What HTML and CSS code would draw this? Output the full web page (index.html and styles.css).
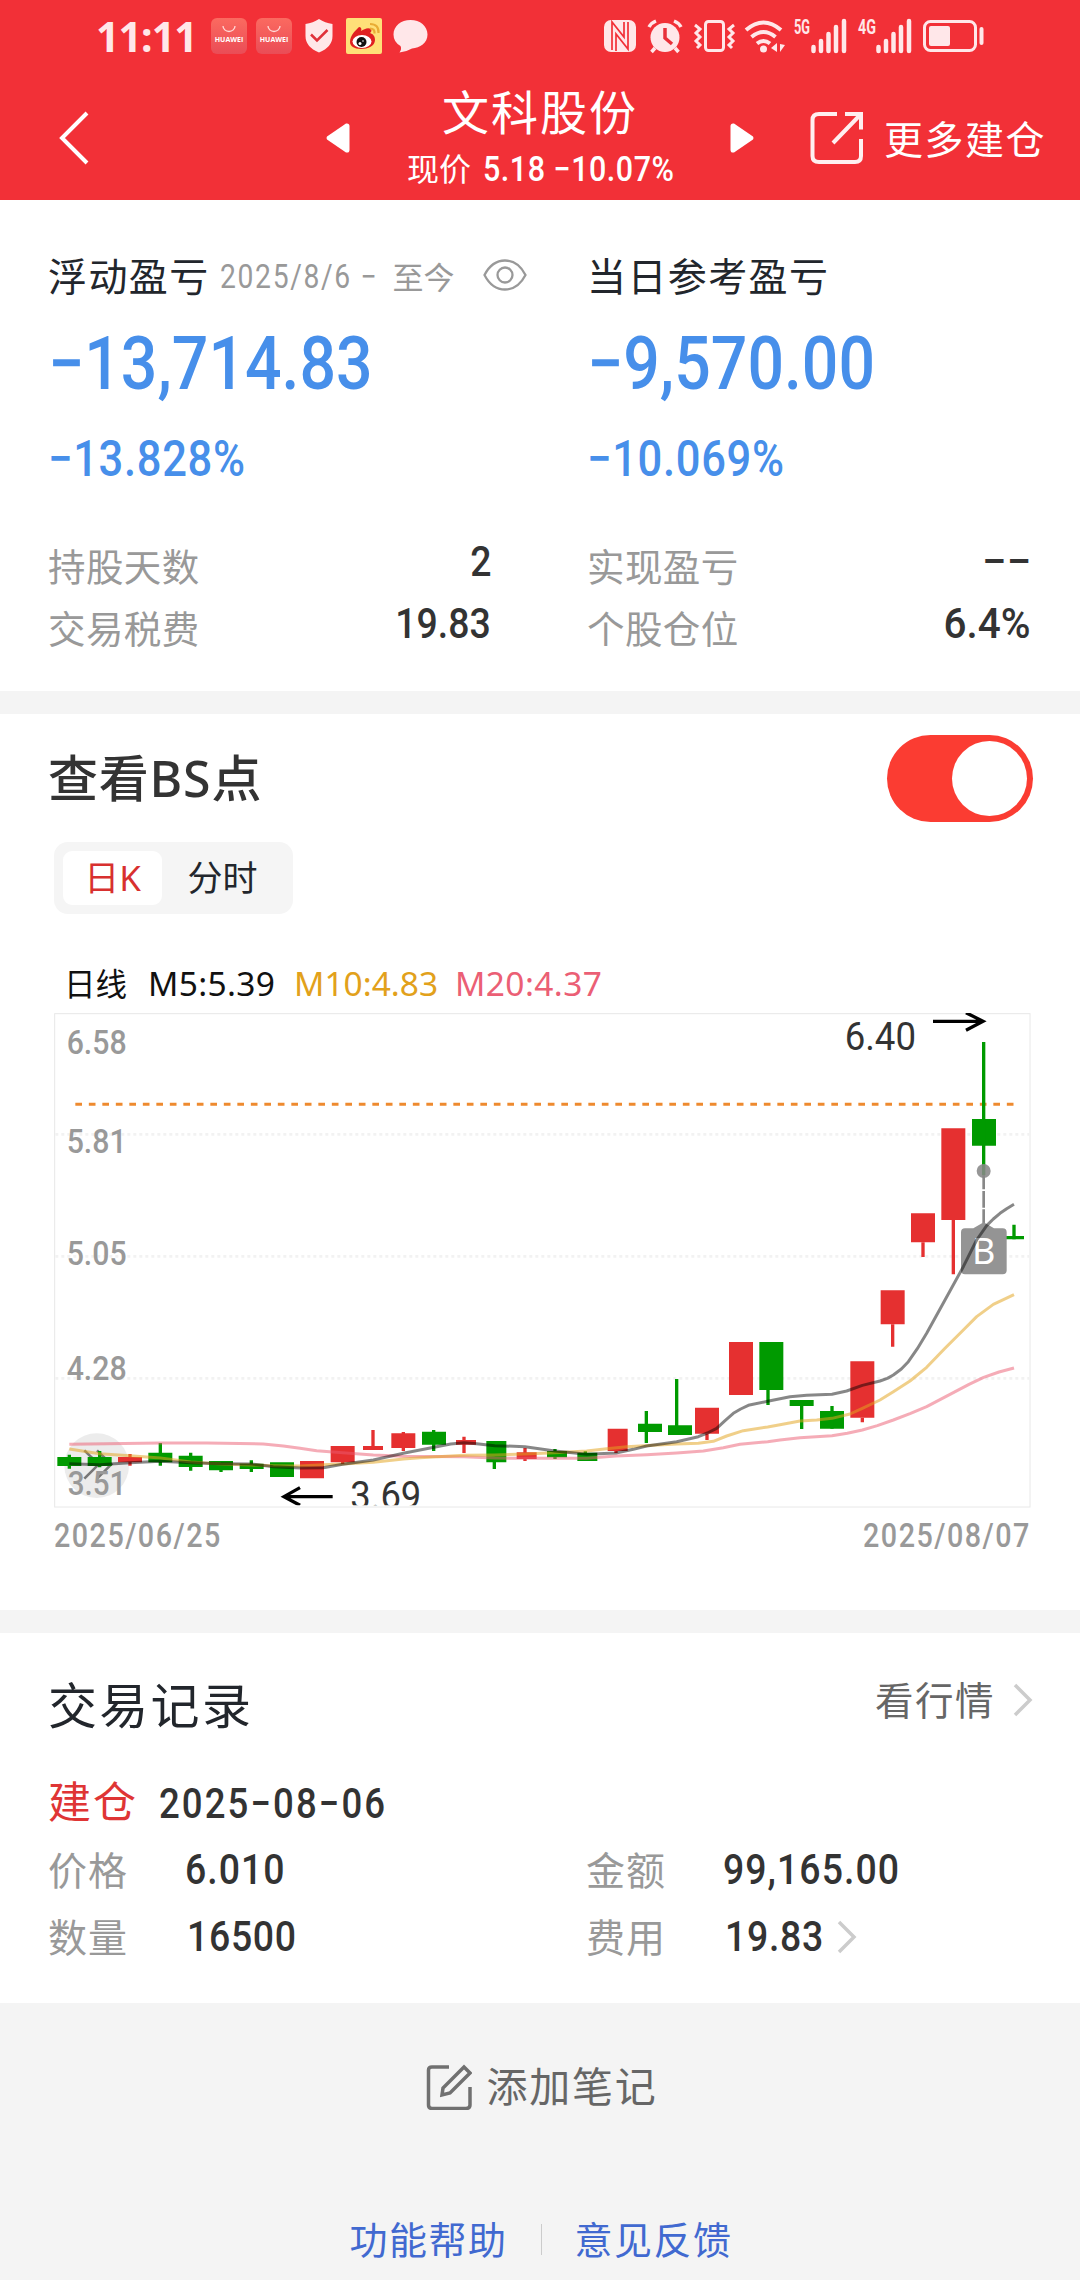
FILE: index.html
```html
<!DOCTYPE html>
<html lang="zh-CN">
<head>
<meta charset="utf-8">
<title>文科股份</title>
<link rel="stylesheet" href="styles.css">
</head>
<body>
<header class="top">
  <div class="status">
    <div class="status-left">
      <span class="time">11:11</span>
      <span class="hw"><svg viewBox="0 0 36 36"><path d="M12 8a6 5.500 0 0 0 12 0" fill="none" stroke="#ffd9d6" stroke-width="1.300"/></svg><b>HUAWEI</b></span>
      <span class="hw"><svg viewBox="0 0 36 36"><path d="M12 8a6 5.500 0 0 0 12 0" fill="none" stroke="#ffd9d6" stroke-width="1.300"/></svg><b>HUAWEI</b></span>
      <svg class="shield" width="28" height="34" viewBox="0 0 28 34"><path d="M14 0Q20 4 27.500 5V17Q27.500 28 14 33.500Q.5 28 .5 17V5Q8 4 14 0Z" fill="#ffe7e9"/><path d="M6 15.500L12 21.500L22.500 11" fill="none" stroke="#e0303a" stroke-width="2.500"/></svg>
      <svg class="weibo" width="36" height="36" viewBox="0 0 36 36"><rect width="36" height="36" rx="2" fill="#ffe078"/><path d="M4 24C4 17 10 12 13 9C15 9 16 11 15 13C18 11 22 9 25 11C26 13 25 14 24 15C27 16 29 18 29 22C29 28 22 31 15 31C8 31 4 28 4 24Z" fill="#e02020"/><ellipse cx="16" cy="23.500" rx="9.500" ry="6.500" fill="#fff"/><circle cx="15.500" cy="24" r="5" fill="#111"/><circle cx="14" cy="25.500" r="1.500" fill="#fff"/><circle cx="17" cy="23" r=".8" fill="#fff"/><path d="M24 6Q33 6 32.500 15M24 10.500Q29 10.500 28.500 15.500" fill="none" stroke="#e9ac34" stroke-width="2.200"/></svg>
      <svg class="bubble" width="35" height="33" viewBox="0 0 35 33"><path d="M17.500 0C27 0 34.500 6 34.500 14.500S27 28 19 28.500Q13 32 6.500 32.500Q9 29 7.500 26Q.5 22 .5 14.500C.5 6 8 0 17.500 0Z" fill="#ffe7e9"/></svg>
    </div>
    <svg class="status-right" width="382" height="44" viewBox="0 -4 382 44" fill="#ffe7e9">
      <rect x="0" y="2" width="32" height="32" rx="7"/>
      <path d="M8 32V4L20 19V4M12 33V16L24 31V4" fill="none" stroke="#f23037" stroke-width="1.700"/>
      <circle cx="61" cy="19.500" r="14.500"/><path d="M45 9Q47 5 52 3M70 3Q75 5 77 9M51 30L47.500 34M71 30L74.500 34" fill="none" stroke="#ffe7e9" stroke-width="3.500"/><path d="M61 10V20L68 26" fill="none" stroke="#e8303a" stroke-width="3.500"/>
      <rect x="101.500" y="3.500" width="18" height="29" rx="3" fill="none" stroke="#ffe7e9" stroke-width="3"/>
      <path d="M91 7l5 4l-4 4l4 4l-4 4l4 4l-3 3M130 7l-5 4l4 4l-4 4l4 4l-4 4l3 3" fill="none" stroke="#ffe7e9" stroke-width="3"/>
      <path d="M142 12Q159.500-3 177 12M147.500 19Q159.500 9 171.500 19M153 25.500Q159.500 20.500 166 25.500" fill="none" stroke="#ffe7e9" stroke-width="4"/><circle cx="159.500" cy="31" r="3.500"/><path d="M173 25v9l-6-4zM176 34v-8l5 1z"/>
      <text x="190" y="16" textLength="16" lengthAdjust="spacingAndGlyphs" class="net">5G</text>
      <path d="M209.500 29v4M217 23v10M224.500 16v17M232 9v24M240 3v30" stroke="#ffe7e9" stroke-width="4.500" stroke-linecap="round"/>
      <text x="254" y="16" textLength="18" lengthAdjust="spacingAndGlyphs" class="net">4G</text>
      <path d="M274.500 29v4M282 23v10M289.500 16v17M297 9v24M305 3v30" stroke="#ffe7e9" stroke-width="4.500" stroke-linecap="round"/>
      <rect x="320.500" y="3.500" width="51" height="29" rx="6" fill="none" stroke="#ffe7e9" stroke-width="3"/><rect x="325" y="8" width="21" height="20" rx="2"/><rect x="375.500" y="9" width="4" height="18" rx="2"/>
    </svg>
  </div>
  <div class="nav">
    <svg class="back" width="30" height="54" viewBox="0 0 30 54"><path d="M28 2L3 27L28 52" fill="none" stroke="#fff" stroke-width="4"/></svg>
    <svg class="prev" width="24" height="30" viewBox="0 0 24 30"><path d="M1 13.500L20 .5Q23.500 0 23.500 3V27Q23.500 30 20 29.500L1 16.500Q0 15 1 13.500Z" fill="#fff"/></svg>
    <div class="stock">
      <h1>文科股份</h1>
      <p>现价<span class="num quote">5.18 −10.07%</span></p>
    </div>
    <svg class="next" width="24" height="30" viewBox="0 0 24 30"><path d="M23 13.500L4 .5Q.5 0 .5 3V27Q.5 30 4 29.500L23 16.500Q24 15 23 13.500Z" fill="#fff"/></svg>
    <a class="more"><svg width="54" height="54" viewBox="0 0 54 54" fill="none" stroke="#ffeff0" stroke-width="4"><path d="M27 3H9Q2.500 3 2.500 9V45Q2.500 51 9 51H45Q51 51 51 45V28"/><path d="M35 3H51V18.500M51 3L23 32"/></svg><span>更多建仓</span></a>
  </div>
</header>

<section class="summary">
  <div class="col">
    <div class="row-title"><h2>浮动盈亏</h2><span class="range"><span class="num d">2025/8/6 −</span><i>至今</i></span><svg width="44" height="32" viewBox="0 0 44 32" fill="none" stroke="#999" stroke-width="2.300"><path d="M1.500 16Q9 1.500 22 1.500T42.500 16Q35 30.500 22 30.500T1.500 16Z"/><circle cx="22" cy="16" r="7.500"/></svg></div>
    <div class="big"><span class="num">−13,714.83</span></div>
    <div class="pct"><span class="num">−13.828%</span></div>
    <div class="kv"><span>持股天数</span><b class="num">2</b></div>
    <div class="kv"><span>交易税费</span><b class="num">19.83</b></div>
  </div>
  <div class="col">
    <div class="row-title"><h2>当日参考盈亏</h2></div>
    <div class="big"><span class="num">−9,570.00</span></div>
    <div class="pct"><span class="num">−10.069%</span></div>
    <div class="kv"><span>实现盈亏</span><b class="num dash">−−</b></div>
    <div class="kv"><span>个股仓位</span><b class="num share">6.4%</b></div>
  </div>
</section>

<section class="chart">
  <div class="chart-head"><h2>查看BS点</h2><span class="toggle"><i></i></span></div>
  <div class="tabs"><span class="tab on">日K</span><span class="tab">分时</span></div>
  <div class="legend"><span class="name">日线</span><span class="m5">M5:5.39</span><span class="m10">M10:4.83</span><span class="m20">M20:4.37</span></div>
  <svg class="plot" width="977" height="495" viewBox="0 0 2931 1485">
    <defs><clipPath id="area"><rect x="0" y="0" width="2931" height="1477"/></clipPath></defs>
    <rect x="2" y="2" width="2926" height="1480" fill="none" stroke="#e8e8e8" stroke-width="3"/>
    <path d="M4 364H2926M4 730H2926M4 1096H2926" stroke="#f2f2f2" stroke-width="8" stroke-dasharray="9 9"/>
    <g class="axis"><text x="38" y="122" textLength="180" lengthAdjust="spacingAndGlyphs">6.58</text><text x="38" y="420" textLength="180" lengthAdjust="spacingAndGlyphs">5.81</text><text x="38" y="756" textLength="180" lengthAdjust="spacingAndGlyphs">5.05</text><text x="38" y="1101" textLength="180" lengthAdjust="spacingAndGlyphs">4.28</text></g>
    <circle cx="128" cy="1358" r="97" fill="#ececec"/>
    <path d="M91 1312L134 1354L91 1397M129 1312L172 1354L129 1397" fill="none" stroke="#777" stroke-width="8"/>
    <g class="axis"><text x="41" y="1446" textLength="176" lengthAdjust="spacingAndGlyphs">3.51</text></g>
    <path d="M64 274H2880" stroke="#ee8a2f" stroke-width="9" stroke-dasharray="20 20.500"/>
    <g fill="none" stroke="#e53030">
      <g stroke-width="72"><path d="M228 1332V1348M774 1344V1396M866 1299V1348M1048 1261V1305M1959 1184V1262M2061 987V1146M2425 1045V1214M2516 832V934M2607 601V688M2698 346V621"/></g>
      <g stroke-width="60"><path d="M957 1299V1311M1236 1281V1295M1418 1318V1338M1691 1247V1314"/></g>
      <path stroke-width="10" d="M228 1323V1358M866 1340V1353M957 1251V1311M1048 1257V1314M1230 1271V1320M1413 1305V1344M1686 1314V1320M1959 1262V1281M2425 1214V1228M2516 934V1001M2607 688V732M2698 621V784"/>
    </g>
    <g fill="none" stroke="#009a00">
      <g stroke-width="72"><path d="M46 1332V1359M137 1332V1359M319 1319V1348M410 1328V1362M501 1344V1372M593 1352V1368M684 1348V1392M1140 1256V1295M1788 1232V1257M1878 1237V1266M2152 987V1131M2243 1161V1179M2334 1194V1247M2790 318V398"/></g>
      <g stroke-width="60"><path d="M1327 1284V1348M1509 1314V1333M1600 1319V1344M2880 669V679"/></g>
      <path stroke-width="10" d="M46 1325V1367M137 1314V1363M319 1290V1358M410 1319V1373M501 1344V1377M592 1342V1377M1139 1251V1314M1321 1284V1368M1503 1308V1338M1594 1315V1344M1777 1194V1290M1868 1098V1266M2142 1131V1176M2243 1179V1248M2334 1179V1247M2789 87V486M2880 635V679"/>
    </g>
    <path d="M2789 486V630" stroke="#888" stroke-width="8" stroke-dasharray="43 5 50 5"/>
    <circle cx="2789" cy="474" r="21" fill="#888" fill-opacity=".88"/>
    <path d="M2733 646H2758L2789 628L2820 646H2846Q2858 646 2858 658V772Q2858 784 2846 784H2733Q2721 784 2721 772V658Q2721 646 2733 646Z" fill="#949494"/>
    <text x="2789" y="753" text-anchor="middle" class="mark">B</text>
    <g fill="none" stroke-width="9" stroke-linejoin="round">
      <polyline stroke="#eb5a70" stroke-opacity=".5" points="46,1294 158,1292 319,1290 458,1290 628,1293 688,1299 738,1306 788,1313 866,1319 958,1326 1048,1330 1230,1331 1322,1335 1413,1336 1598,1336 1686,1329 1778,1325 1868,1320 1948,1314 2008,1304 2058,1294 2141,1286 2178,1281 2238,1274 2334,1268 2380,1261 2425,1251 2470,1238 2518,1221 2568,1202 2618,1181 2698,1139 2745,1114 2789,1093 2835,1077 2880,1065"/>
      <polyline stroke="#e2a520" stroke-opacity=".53" points="46,1308 137,1322 228,1328 319,1335 410,1347 501,1353 592,1356 658,1358 738,1359 808,1355 866,1353 958,1348 1048,1338 1098,1334 1230,1327 1322,1326 1413,1323 1503,1319 1598,1314 1658,1307 1718,1301 1798,1297 1868,1293 1933,1291 1978,1285 2018,1269 2068,1253 2141,1242 2178,1235 2238,1224 2288,1221 2334,1216 2388,1203 2425,1186 2478,1161 2518,1136 2568,1104 2618,1063 2673,1006 2728,951 2768,911 2818,874 2880,845"/>
      <polyline stroke="#000" stroke-opacity=".47" points="46,1352 137,1355 228,1349 319,1345 410,1349 501,1352 592,1353 658,1361 738,1365 808,1364 866,1354 958,1341 1048,1321 1140,1303 1190,1293 1230,1289 1268,1292 1322,1298 1413,1301 1503,1314 1598,1324 1686,1320 1738,1309 1778,1299 1868,1286 1933,1271 1960,1260 1988,1246 2014,1222 2038,1201 2060,1188 2083,1177 2141,1165 2208,1151 2258,1147 2334,1144 2378,1134 2425,1117 2478,1104 2500,1096 2518,1086 2542,1068 2563,1046 2590,1007 2618,961 2673,861 2728,761 2768,681 2798,638 2818,618 2838,601 2858,587 2880,574"/>
    </g>
    <g clip-path="url(#area)">
      <path d="M2637 25H2785M2736-1L2787 25L2736 52M836 1451H692M738 1424L690 1451L738 1477" fill="none" stroke="#000" stroke-width="10"/>
      <text x="2372" y="111" textLength="214" lengthAdjust="spacingAndGlyphs" class="peak">6.40</text>
      <text x="889" y="1487" textLength="213" lengthAdjust="spacingAndGlyphs" class="peak">3.69</text>
    </g>
  </svg>
  <div class="dates"><span class="num">2025/06/25</span><span class="num end">2025/08/07</span></div>
</section>

<section class="trades">
  <div class="trades-head"><h2>交易记录</h2><a>看行情<svg width="20" height="34" viewBox="0 0 20 34"><path d="M2 2L17 17L2 32" fill="none" stroke="#ccc" stroke-width="3.500"/></svg></a></div>
  <div class="open"><span class="tag">建仓</span><span class="num">2025−08−06</span></div>
  <div class="detail">
    <div><span>价格</span><b class="num">6.010</b></div>
    <div><span>金额</span><b class="num">99,165.00</b></div>
    <div><span>数量</span><b class="num one">16500</b></div>
    <div><span>费用</span><b class="num one">19.83</b><svg width="20" height="34" viewBox="0 0 20 34"><path d="M2 2L17 17L2 32" fill="none" stroke="#ccc" stroke-width="3.500"/></svg></div>
  </div>
</section>

<footer>
  <a class="note"><svg width="46" height="46" viewBox="0 0 46 46" fill="none" stroke="#707070" stroke-width="3.500"><path d="M23 3H6Q2.500 3 2.500 6V41Q2.500 44.500 6 44.500H40Q44 44.500 44 41V23"/><path d="M38 3L44 9L24 29L16 31L17 24Z"/></svg><span>添加笔记</span></a>
  <nav><a>功能帮助</a><i></i><a>意见反馈</a></nav>
</footer>
</body>
</html>
```
FILE: styles.css
```css
* { box-sizing: border-box; margin: 0; padding: 0; }
body {
  width: 1080px; height: 2280px; overflow: hidden;
  background: #f4f4f4; color: #333;
  font-family: "Noto Sans", "Noto Sans CJK SC", sans-serif; font-size: 39px; line-height: 1;
}
h1, h2, b { font-weight: 400; }
i { font-style: normal; }
svg { display: block; flex: none; }
.num {
  display: inline-block; font-family: Roboto, sans-serif; font-weight: 500;
  white-space: nowrap; transform: scaleX(.87); transform-origin: left center;
}

/* status bar and navigation */
.top { height: 200px; background: #f23037; color: #fff; }
.status { height: 72px; display: flex; align-items: center; justify-content: space-between; padding: 0 94px 0 96px; }
.status-left { display: flex; align-items: center; }
.time { width: 115px; font: 700 41px/72px "Noto Sans", sans-serif; color: #ffe7e9; letter-spacing: -.9px; }
.hw { width: 36px; height: 36px; margin-right: 9px; border-radius: 6px; background: linear-gradient(#fb6a60, #ea4c56); display: grid; justify-items: center; }
.hw svg { grid-area: 1 / 1; width: 36px; height: 36px; }
.hw b { grid-area: 1 / 1; align-self: center; font: 700 7px/8px "Open Sans", sans-serif; color: #fff; padding-top: 7px; }
.shield { margin: 0 13px 0 4px; }
.bubble { margin-left: 11px; }
.net { font: 700 20px Roboto, sans-serif; }
.nav { height: 128px; display: flex; align-items: center; padding: 0 0 0 59px; }
.back, .prev, .next, .more { margin-top: 4px; }
.prev { margin-left: 237px; }
.stock { width: 380px; text-align: center; padding-top: 6px; }
.stock h1 { font-size: 47px; line-height: 52px; letter-spacing: 2px; }
.stock p { height: 46px; display: flex; align-items: center; font-size: 32px; padding-left: 57px; margin-top: 8px; }
.stock .num { font-size: 35px; margin-left: 12px; letter-spacing: .6px; }
.more { display: flex; align-items: center; margin-left: 56px; letter-spacing: 1.500px; white-space: nowrap; }
.more span { margin-left: 20px; }

/* profit summary */
.summary { height: 491px; background: #fff; padding: 50px 50px 0 48px; display: grid; grid-template-columns: 443px 443px; justify-content: space-between; }
.col .row-title { width: 500px; height: 50px; display: flex; align-items: center; color: #22262c; }
.row-title h2 { font-size: 39px; letter-spacing: 1.400px; }
.range { width: 235px; margin-left: 10px; display: flex; align-items: center; justify-content: space-between; color: #999; font-size: 31px; padding-top: 4px; }
.range .num { width: 166px; font-size: 32.500px; font-weight: 400; letter-spacing: 1.900px; }
.row-title svg { margin-left: 28px; }
.big { height: 126px; display: flex; align-items: center; color: #478fea; font-size: 74px; padding-top: 2px; }
.pct { height: 65px; display: flex; align-items: center; color: #478fea; font-size: 50px; margin-bottom: 45px; letter-spacing: .8px; }
.kv { height: 62px; display: flex; align-items: center; justify-content: space-between; color: #999; font-size: 37.500px; letter-spacing: .4px; }
.kv .num { transform-origin: right center; font-size: 43px; letter-spacing: 0; color: #333; padding-bottom: 11px; }
.kv .dash { transform: scaleX(1.020); margin-right: -1px; }
.kv .share { transform: scaleX(.94); }

/* candlestick chart */
.chart { margin-top: 23px; height: 896px; background: #fff; padding: 0 49px 0 48px; }
.chart-head { height: 128px; display: flex; align-items: center; justify-content: space-between; }
.chart-head h2 { font-size: 50px; font-weight: 500; letter-spacing: .8px; padding-bottom: 1px; }
.toggle { width: 146px; height: 87px; border-radius: 44px; background: #fb3c32; padding: 6px; display: flex; justify-content: flex-end; margin-right: -2px; }
.toggle i { width: 75px; height: 75px; border-radius: 50%; background: #fff; }
.tabs { width: 239px; height: 72px; margin-left: 6px; padding: 9px; border-radius: 14px; background: #f5f5f5; display: flex; font-size: 35px; color: #22262c; }
.tab { width: 99px; height: 54px; line-height: 53px; text-align: center; border-radius: 9px; margin-right: 9px; }
.tab + .tab { width: 103px; }
.on { background: #fff; color: #d8302f; }
.legend { height: 99px; display: flex; align-items: center; padding: 41px 0 0 16px; font-size: 33.500px; color: #111; }
.legend .name { width: 84px; font-size: 31.500px; padding-bottom: 1px; }
.m5 { width: 146px; letter-spacing: .3px; }
.m10 { width: 161px; color: #e2a11b; }
.m20 { color: #eb5f75; letter-spacing: .4px; }
.plot { margin-left: 6px; overflow: visible; }
.axis { font: 500 100px Roboto, sans-serif; fill: #999; }
.peak { font: 400 117px Roboto, sans-serif; fill: #333; }
.mark { font: 400 108px "Noto Sans", sans-serif; fill: #fff; }
.dates { height: 54px; margin: 0 0 0 6px; display: flex; align-items: center; justify-content: space-between; color: #999; font-size: 33px; letter-spacing: 1.700px; }
.dates .end { transform-origin: right center; }

/* trade records */
.trades { margin-top: 23px; height: 370px; background: #fff; padding: 40px 47px 0 48px; }
.trades-head { height: 64px; display: flex; align-items: center; justify-content: space-between; color: #22262c; }
.trades-head h2 { font-size: 49px; letter-spacing: 2.300px; }
.trades-head a { display: flex; align-items: center; gap: 18px; color: #666; font-size: 38.500px; letter-spacing: 1.500px; padding-bottom: 10px; }
.open { height: 64px; margin-top: 32px; display: flex; align-items: center; }
.tag { width: 111px; font-size: 43px; letter-spacing: 2px; color: #df3535; }
.open .num { font-size: 42px; letter-spacing: 2.400px; padding-top: 5px; }
.detail { display: grid; grid-template-columns: 538px 1fr; grid-auto-rows: 67px; margin-top: 3px; }
.detail div { display: flex; align-items: center; color: #999; }
.detail span { width: 137px; letter-spacing: 1px; }
.detail .num { font-size: 43px; color: #333; letter-spacing: 1.200px; }
.detail .one { margin-left: 2px; letter-spacing: .8px; }
.detail svg { margin-left: -2px; }

/* footer */
footer { display: flex; flex-direction: column; align-items: center; color: #666; }
.note { display: flex; align-items: center; gap: 15px; height: 60px; margin: 54px 0 0 3px; font-size: 41px; letter-spacing: 1.700px; }
.note span { padding-bottom: 2px; }
footer nav { display: flex; align-items: center; height: 60px; margin: 92px 0 0 2px; font-size: 38px; letter-spacing: 1.500px; color: #4169d0; }
footer nav i { width: 1px; height: 31px; margin: 0 33px 0 33px; background: #ccc; }
```
